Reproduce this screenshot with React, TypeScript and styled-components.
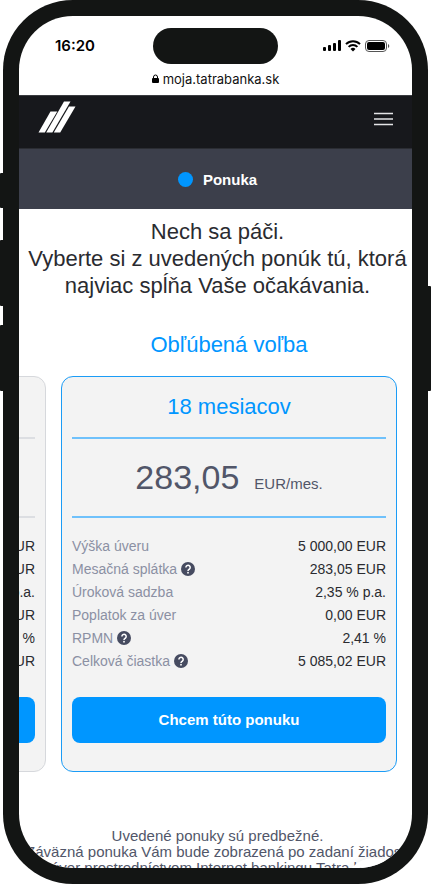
import React from "react";
import styled, { createGlobalStyle } from "styled-components";

const blue = "#0096ff";
const slate = "#515669";

const GlobalStyle = createGlobalStyle`
  *, *::before, *::after { box-sizing: border-box; }
  body {
    margin: 0;
    background: #fff;
    color: #2a2b30;
    font-family: "Liberation Sans", Arial, sans-serif;
  }
  h1, h2, h3, p, dl, dt, dd { margin: 0; font-weight: 400; }
`;

const Device = styled.div`
  position: relative;
  height: 100vh;
  min-height: 640px;
  padding: 0 3px;
`;

const SideButton = styled.span<{ $side: "left" | "right"; $top: number; $length: number }>`
  position: absolute;
  ${(p) => p.$side}: 0;
  top: ${(p) => p.$top}px;
  width: 6px;
  height: ${(p) => p.$length}px;
  border-radius: 1px;
  background: #131514;
`;

const Frame = styled.div`
  position: relative;
  height: 100%;
  padding: 16px;
  border-radius: 70px;
  background: #131514;
`;

const Screen = styled.div`
  position: relative;
  display: flex;
  flex-direction: column;
  height: 100%;
  overflow: hidden;
  border-radius: 54px;
  background: #fff;
`;

const StatusBar = styled.div`
  display: grid;
  grid-template-columns: 1fr 125px 1fr;
  align-items: center;
  flex: none;
  height: 36px;
  margin-top: 12px;
  color: #000;
`;

const Clock = styled.time`
  padding-left: 36px;
  font: 600 15px/20px Inter, sans-serif;
`;

const Island = styled.div`
  height: 36px;
  border-radius: 18px;
  background: #131514;
`;

const StatusIcons = styled.div`
  display: flex;
  justify-content: flex-end;
  align-items: center;
  gap: 4px;
  padding-right: 22px;
`;

const AddressBar = styled.div`
  display: flex;
  flex: none;
  justify-content: center;
  align-items: center;
  gap: 4px;
  height: 31px;
  padding-bottom: 2px;
  color: #111;
  font: 400 13px/16px Inter, sans-serif;
`;

const Header = styled.header`
  display: flex;
  flex: none;
  justify-content: space-between;
  align-items: center;
  height: 54px;
  padding: 0 19px;
  border-top: 1px solid #3a3c40;
  border-bottom: 1px solid #2b2d33;
  background: #17181c;
`;

const LogoLink = styled.a`
  display: flex;
  padding-bottom: 11px;
`;

const MenuButton = styled.button`
  display: flex;
  padding: 0 0 7px;
  border: 0;
  background: none;
`;

const StepBar = styled.nav`
  display: flex;
  flex: none;
  justify-content: center;
  align-items: center;
  gap: 10px;
  height: 60px;
  background: #3c3f4b;
  color: #fff;
  font-size: 15px;
  font-weight: 700;
  padding-left: 4px;
`;

const StepDot = styled.span`
  width: 15px;
  height: 15px;
  border-radius: 50%;
  background: ${blue};
`;

const Intro = styled.h1`
  flex: none;
  padding: 9px 0 0;
  text-align: center;
  white-space: nowrap;
  font-size: 22px;
  line-height: 27px;
  margin-left: 4px;
`;

const Carousel = styled.section`
  display: flex;
  flex: none;
  justify-content: flex-end;
  align-items: flex-end;
  gap: 15px;
  margin-top: 32px;
  padding-right: 15px;
  overflow: hidden;
`;

const Slide = styled.div`
  flex: 0 0 calc(100% - 42px);
`;

const SlideTitle = styled.h2`
  padding-bottom: 17px;
  color: ${blue};
  font-size: 22px;
  line-height: 28px;
  text-align: center;
`;

const Card = styled.article<{ $active: boolean }>`
  --line: ${(p) => (p.$active ? "#6fc1fb" : "#dcdee2")};
  padding: 0 10px 28px;
  border: 1px solid ${(p) => (p.$active ? "#1b9cf6" : "#d6d8dc")};
  border-radius: 12px;
  background: #f3f3f3;
`;

const Term = styled.h3`
  height: 62px;
  border-bottom: 2px solid var(--line);
  color: ${blue};
  font-size: 22px;
  line-height: 60px;
  text-align: center;
`;

const Price = styled.p`
  display: flex;
  justify-content: center;
  align-items: baseline;
  gap: 15px;
  height: 79px;
  border-bottom: 2px solid var(--line);
  color: ${slate};
  font-size: 34px;
  line-height: 77px;
`;

const Unit = styled.span`
  font-size: 15px;
`;

const Details = styled.dl`
  padding: 17px 0 24px;
`;

const Row = styled.div`
  display: flex;
  justify-content: space-between;
  height: 23px;
  font-size: 14px;
  line-height: 23px;
  white-space: nowrap;
`;

const Label = styled.dt`
  display: flex;
  align-items: center;
  gap: 4px;
  color: #8b90a3;
`;

const HelpButton = styled.button`
  display: flex;
  padding: 0 0 2px;
  border: 0;
  background: none;
`;

const ChooseButton = styled.button`
  display: block;
  width: 100%;
  height: 46px;
  border: 0;
  border-radius: 8px;
  background: ${blue};
  color: #fff;
  font: 700 15px/20px "Liberation Sans", Arial, sans-serif;
`;

const Note = styled.p`
  display: flex;
  flex: none;
  flex-direction: column;
  align-items: center;
  margin-top: 56px;
  padding-left: 4px;
  color: ${slate};
  font-size: 15px;
  line-height: 16px;
  white-space: nowrap;
`;

const ChatButton = styled.button`
  position: absolute;
  right: 8px;
  bottom: -50px;
  width: 60px;
  height: 60px;
  border: 0;
  border-radius: 50%;
  background: #fff;
  box-shadow: 0 0 8px rgba(0, 0, 0, 0.08);
`;

const SignalIcon = () => (
  <svg width="18" height="12" viewBox="0 0 18 12" aria-hidden="true">
    <rect x="0" y="7" width="3" height="4" rx="1" />
    <rect x="5" y="5" width="3" height="6" rx="1" />
    <rect x="10" y="3" width="3" height="8" rx="1" />
    <rect x="15" y="0" width="3" height="11" rx="1" />
  </svg>
);

const WifiIcon = () => (
  <svg width="16" height="12" viewBox="0 0 16 12" fill="none" stroke="#000" strokeWidth="2" aria-hidden="true">
    <path d="M1 4.1a10 10 0 0 1 14 0" />
    <path d="M3.6 6.9a6.3 6.3 0 0 1 8.8 0" />
    <path d="M8 11.4 5.5 9a3.6 3.6 0 0 1 5 0Z" fill="#000" stroke="none" />
  </svg>
);

const BatteryIcon = () => (
  <svg width="25" height="12" viewBox="0 0 25 12" aria-hidden="true">
    <rect x="0.5" y="0.5" width="21" height="11" rx="3.5" fill="none" stroke="#555" />
    <rect x="2" y="2" width="18" height="8" rx="2" />
    <path d="M23 4v4a2.2 2.2 0 0 0 0-4Z" fill="#555" />
  </svg>
);

const LockIcon = () => (
  <svg width="7" height="10" viewBox="0 0 7 10" aria-hidden="true">
    <rect x="0" y="4" width="7" height="5" rx="1" />
    <path d="M1.5 4.5V3a2 2 0 0 1 4 0v1.5" fill="none" stroke="#000" />
  </svg>
);

const Logo = () => (
  <svg width="38" height="32" viewBox="0 0 38 32" fill="#fff" aria-hidden="true">
    <path d="M0.5 31.5 12.5 10.5h6.8L6.8 31.5Z" />
    <path d="M8.2 31.5 26 .5h6.5L14.4 31.5Z" />
    <path d="M15.8 31.5 31 5.5h6.5L22.2 31.5Z" />
  </svg>
);

const MenuIcon = () => (
  <svg width="19" height="14" viewBox="0 0 19 14" stroke="#e4e4e6" strokeWidth="1.5" aria-hidden="true">
    <path d="M0 1.5h19M0 7h19M0 12.5h19" />
  </svg>
);

const HelpIcon = () => (
  <svg width="14" height="14" viewBox="0 0 14 14" aria-hidden="true">
    <circle cx="7" cy="7" r="7" fill="#464b60" />
    <path d="M4.9 5.4a2.15 2.15 0 1 1 3.5 1.7C7.5 7.8 7 8 7 8.9" fill="none" stroke="#fff" strokeWidth="1.5" />
    <rect x="6.2" y="9.9" width="1.6" height="1.6" fill="#fff" />
  </svg>
);

type Detail = { label: string; value: string; help?: boolean };
type Offer = { term: string; price: string; details: Detail[]; title?: string };

const details = (values: string[]): Detail[] => [
  { label: "Výška úveru", value: values[0] },
  { label: "Mesačná splátka", value: values[1], help: true },
  { label: "Úroková sadzba", value: values[2] },
  { label: "Poplatok za úver", value: values[3] },
  { label: "RPMN", value: values[4], help: true },
  { label: "Celková čiastka", value: values[5], help: true },
];

const offers: Offer[] = [
  { term: "", price: "", details: details(["EUR", "EUR", "% p.a.", "EUR", "0 %", "EUR"]) },
  {
    title: "Obľúbená voľba",
    term: "18 mesiacov",
    price: "283,05",
    details: details(["5 000,00 EUR", "283,05 EUR", "2,35 % p.a.", "0,00 EUR", "2,41 %", "5 085,02 EUR"]),
  },
];

const OfferSlide = ({ offer }: { offer: Offer }) => (
  <Slide>
    {offer.title && <SlideTitle>{offer.title}</SlideTitle>}
    <Card $active={Boolean(offer.title)}>
      <Term>{offer.term}</Term>
      <Price>
        {offer.price} {offer.price && <Unit>EUR/mes.</Unit>}
      </Price>
      <Details>
        {offer.details.map((d) => (
          <Row key={d.label}>
            <Label>
              {d.label}
              {d.help && (
                <HelpButton type="button" aria-label={d.label}>
                  <HelpIcon />
                </HelpButton>
              )}
            </Label>
            <dd>{d.value}</dd>
          </Row>
        ))}
      </Details>
      <ChooseButton type="button">Chcem túto ponuku</ChooseButton>
    </Card>
  </Slide>
);

export default function App() {
  return (
    <>
      <GlobalStyle />
      <Device>
        <SideButton $side="left" $top={173} $length={35} />
        <SideButton $side="left" $top={240} $length={66} />
        <SideButton $side="left" $top={325} $length={66} />
        <SideButton $side="right" $top={286} $length={105} />
        <Frame>
          <Screen>
            <StatusBar>
              <Clock>16:20</Clock>
              <Island />
              <StatusIcons>
                <SignalIcon />
                <WifiIcon />
                <BatteryIcon />
              </StatusIcons>
            </StatusBar>
            <AddressBar>
              <LockIcon />
              moja.tatrabanka.sk
            </AddressBar>
            <Header>
              <LogoLink href="#" aria-label="Tatra banka">
                <Logo />
              </LogoLink>
              <MenuButton type="button" aria-label="Menu">
                <MenuIcon />
              </MenuButton>
            </Header>
            <StepBar>
              <StepDot />
              Ponuka
            </StepBar>
            <Intro>
              Nech sa páči.
              <br />
              Vyberte si z uvedených ponúk tú, ktorá
              <br />
              najviac spĺňa Vaše očakávania.
            </Intro>
            <Carousel>
              {offers.map((offer, i) => (
                <OfferSlide key={i} offer={offer} />
              ))}
            </Carousel>
            <Note>
              <span>Uvedené ponuky sú predbežné.</span>
              <span>Záväzná ponuka Vám bude zobrazená po zadaní žiadosti</span>
              <span>o úver prostredníctvom Internet bankingu Tatra banky.</span>
            </Note>
            <ChatButton type="button" aria-label="Chat" />
          </Screen>
        </Frame>
      </Device>
    </>
  );
}
